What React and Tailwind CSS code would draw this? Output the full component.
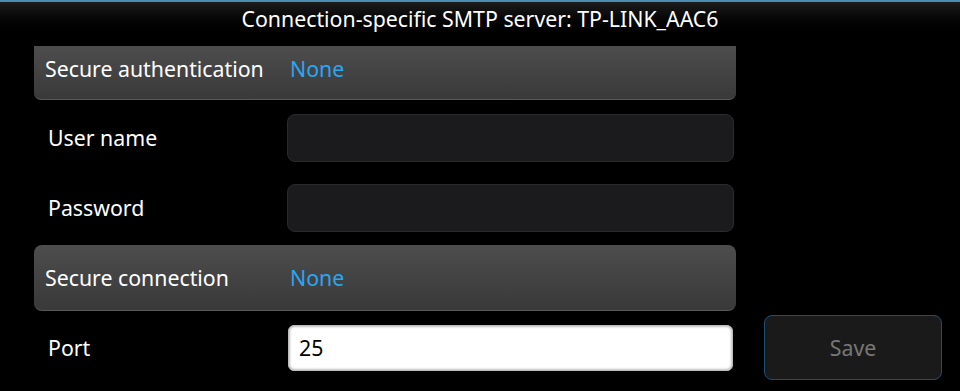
export default function App() {
  const font = { fontFamily: '"Noto Sans", "Open Sans", sans-serif' };

  return (
    <div className="w-[960px] h-[391px] bg-black text-white overflow-hidden" style={font}>
      {/* HEADER */}
      <div className="h-[40px] border-t-2 border-[#4a8fb3] bg-gradient-to-b from-[#1c1c1c] to-black flex justify-center pt-[3px]">
        <h1 className="text-[21.3px] leading-[28px] text-white">
          Connection-specific SMTP server: TP-LINK_AAC6
        </h1>
      </div>

      <div className="flex items-start">
        <div className="w-[702px] ml-[34px] mt-[6px] flex flex-col">
          {/* SECURE AUTHENTICATION */}
          <div className="h-[54px] rounded-b-[7px] bg-gradient-to-b from-[#4e4d4e] to-[#3a393a] border-b border-[#5a595a] flex items-center pl-[11px] pb-[7px]">
            <span className="w-[245px] text-[21.3px]">Secure authentication</span>
            <span className="text-[21.3px] text-[#2aa6f2]">None</span>
          </div>

          {/* USER NAME */}
          <div className="h-[48px] mt-[14px] flex items-center">
            <span className="w-[253px] pl-[14px] text-[21.3px]">User name</span>
            <div className="w-[447px] h-[48px] rounded-[8px] bg-[#1b1b1e] border border-[#2b2b2e]" />
          </div>

          {/* PASSWORD */}
          <div className="h-[48px] mt-[22px] flex items-center">
            <span className="w-[253px] pl-[14px] text-[21.3px]">Password</span>
            <div className="w-[447px] h-[48px] rounded-[8px] bg-[#1b1b1e] border border-[#2b2b2e]" />
          </div>

          {/* SECURE CONNECTION */}
          <div className="h-[66px] mt-[13px] rounded-[8px] bg-gradient-to-b from-[#4e4d4e] to-[#3a393a] border-b border-[#5a595a] flex items-center pl-[11px]">
            <span className="w-[245px] text-[21.3px]">Secure connection</span>
            <span className="text-[21.3px] text-[#2aa6f2]">None</span>
          </div>

          {/* PORT */}
          <div className="h-[46px] mt-[14px] flex items-center">
            <span className="w-[254px] pl-[14px] text-[21.3px]">Port</span>
            <div className="w-[445px] h-[46px] rounded-[6px] bg-white border border-[#bdbdbd] shadow-[inset_0_0_3px_rgba(0,0,0,0.5)] flex items-center pl-[10px]">
              <span className="text-[21.3px] text-black">25</span>
            </div>
          </div>
        </div>

        {/* SAVE */}
        <button className="w-[178px] h-[65px] mt-[275px] ml-[28px] rounded-[8px] bg-[#1b1a1b] border border-[#1d4f73] text-[21.3px] text-[#777777]">
          Save
        </button>
      </div>
    </div>
  );
}
